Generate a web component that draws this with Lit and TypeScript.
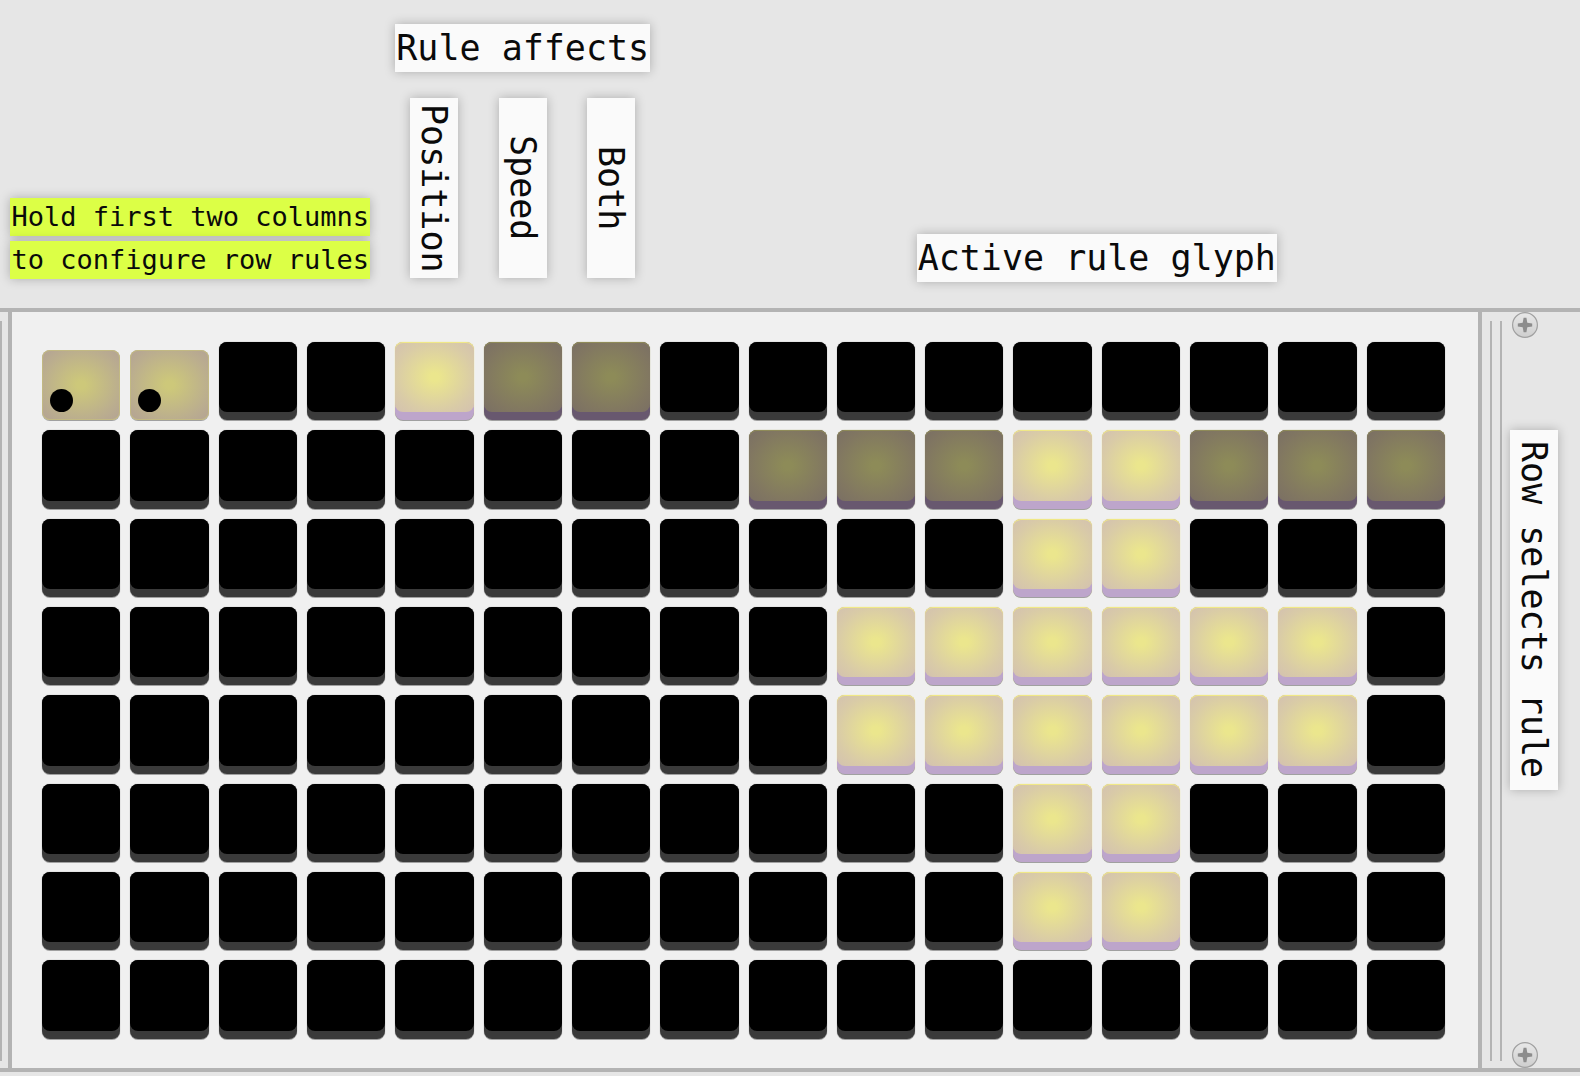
import { LitElement, html, css } from "lit";
import { customElement, property, state } from "lit/decorators.js";
import { classMap } from "lit/directives/class-map.js";

const PATTERN = [
  "HH..LDD.........",
  "........DDDLLDDD",
  "...........LL...",
  ".........LLLLLL.",
  ".........LLLLLL.",
  "...........LL...",
  "...........LL...",
  "................",
];

@customElement("grid-key")
export class GridKey extends LitElement {
  @property() level = ".";
  @property() label = "";

  static styles = css`
    :host {
      display: block;
      aspect-ratio: 1;
    }
    .key {
      display: block;
      position: relative;
      box-sizing: border-box;
      width: 100%;
      height: 100%;
      margin: 0;
      padding: 0 0 8px;
      border: 0;
      border-radius: 8px;
      background: #3a3a3a;
      box-shadow: 0 1px 0 #a0a0a0, 0 0 1px #777;
    }
    .face {
      display: block;
      box-sizing: border-box;
      height: 100%;
      border-radius: 8px;
      background: #000;
    }
    .lit {
      background: #bda5cb;
      box-shadow: 0 1px 0 #a0a0a0, 0 0 1px #f0e450;
    }
    .lit .face {
      background: radial-gradient(#ebe68d 8%, #d9cba7 70%, #d3c1b0);
      box-shadow: inset 0 1px 0 #f0e886;
    }
    .dim {
      background: #68586f;
      box-shadow: 0 1px 0 #a0a0a0, 0 0 1px #8f8b40;
    }
    .dim .face {
      background: radial-gradient(#8d8b58 8%, #817761 70%, #7a6f64);
      box-shadow: inset 0 1px 0 #8f8b58;
    }
    .held {
      padding: 8px 0 0;
      background: none;
      box-shadow: none;
    }
    .held .face {
      background: radial-gradient(#cdc87a 8%, #bbae8e 70%, #b3a295);
      box-shadow: inset 0 0 0 1px #c2b982, 0 1px 0 #a0a0a0;
    }
    .finger {
      position: absolute;
      left: 8px;
      bottom: 8px;
      width: 23px;
      height: 23px;
      border-radius: 50%;
      background: #000;
    }
  `;

  render() {
    const held = this.level === "H";
    return html`<button
      class=${classMap({ key: true, lit: this.level === "L", dim: this.level === "D", held })}
      aria-label=${this.label}
      aria-pressed=${held ? "true" : "false"}
    ><span class="face"></span>${held ? html`<span class="finger"></span>` : ""}</button>`;
  }
}

@customElement("case-screw")
export class CaseScrew extends LitElement {
  static styles = css`
    :host { display: block; width: 26px; height: 26px; }
    svg { display: block; }
  `;
  render() {
    return html`<svg width="26" height="26" viewBox="0 0 26 26" aria-hidden="true">
      <defs>
        <linearGradient id="metal" x1="0" y1="0" x2="0" y2="1">
          <stop offset="0" stop-color="#e8e8e8" />
          <stop offset="1" stop-color="#cecece" />
        </linearGradient>
      </defs>
      <circle cx="13" cy="13" r="12.4" fill="url(#metal)" stroke="#a0a0a0" stroke-width="1.2" />
      <path d="M11.6 5.8h2.8l.9 4.9 4.9.9v2.8l-4.9.9-.9 4.9h-2.8l-.9-4.9-4.9-.9v-2.8l4.9-.9z" fill="#8c8c8c" />
    </svg>`;
  }
}

@customElement("app-root")
export class AppRoot extends LitElement {
  @state() private pattern = PATTERN;

  static styles = css`
    :host {
      display: block;
      min-height: 100vh;
      background: #e6e6e6;
      color: #0a0a0a;
      font-family: "DejaVu Sans Mono", "Liberation Mono", monospace;
      font-size: 35px;
      line-height: 48px;
    }
    .captions {
      display: grid;
      grid-template-columns: repeat(16, minmax(0, 1fr));
      column-gap: 10px;
      align-items: end;
      padding: 24px 135px 26px 42px;
    }
    .tag {
      background: #fafafa;
      box-shadow: 0 0 10px rgba(0, 0, 0, 0.25);
      white-space: nowrap;
      text-align: center;
    }
    .upright {
      writing-mode: vertical-rl;
      width: 48px;
      height: 180px;
    }
    .hint {
      grid-column: 1 / 5;
      justify-self: end;
      display: grid;
      gap: 5px;
      width: 360px;
      margin: 0 15px 3px 0;
      font-size: 27px;
      line-height: 38px;
    }
    .hint .tag { background: #dcff46; }
    .affects {
      grid-column: 5 / 8;
      display: grid;
      grid-template-columns: subgrid;
      row-gap: 26px;
      justify-items: center;
      margin-bottom: 4px;
    }
    .affects .title { grid-column: 1 / -1; justify-self: stretch; }
    .glyph {
      grid-column: 9 / 17;
      justify-self: center;
      width: 360px;
    }
    .device {
      display: flex;
      border-top: 4px solid #b3b3b3;
      border-bottom: 4px solid #b3b3b3;
    }
    .edge { width: 8px; display: flex; padding: 9px 0 7px; box-sizing: border-box; }
    .line { width: 2px; background: #b3b3b3; }
    .panel {
      flex: 1;
      min-width: 0;
      display: grid;
      grid-template-columns: repeat(16, minmax(0, 1fr));
      gap: 10px;
      padding: 30px 33px 29px 30px;
      border-left: 4px solid #b3b3b3;
      border-right: 4px solid #b3b3b3;
      background: #f0f0f0;
    }
    .rail { display: flex; width: 98px; }
    .seams { display: flex; gap: 8px; padding: 9px 8px 7px; }
    .mount {
      display: flex;
      flex-direction: column;
      justify-content: space-between;
      align-items: flex-start;
    }
    .mount case-screw { margin-left: 2px; }
    .side { height: 360px; margin-bottom: 160px; }
  `;

  render() {
    return html`
      <header class="captions">
        <div class="hint">
          <div class="tag">Hold first two columns</div>
          <div class="tag">to configure row rules</div>
        </div>
        <div class="affects">
          <div class="tag title">Rule affects</div>
          <div class="tag upright">Position</div>
          <div class="tag upright">Speed</div>
          <div class="tag upright">Both</div>
        </div>
        <div class="tag glyph">Active rule glyph</div>
      </header>
      <main class="device">
        <div class="edge"><div class="line"></div></div>
        <section class="panel" aria-label="Key grid">
          ${this.pattern.map((row, r) =>
            [...row].map(
              (level, c) =>
                html`<grid-key .level=${level} .label=${`Row ${r + 1}, column ${c + 1}`}></grid-key>`
            )
          )}
        </section>
        <aside class="rail">
          <div class="seams"><div class="line"></div><div class="line"></div></div>
          <div class="mount">
            <case-screw></case-screw>
            <div class="tag upright side">Row selects rule</div>
            <case-screw></case-screw>
          </div>
        </aside>
      </main>
    `;
  }
}
